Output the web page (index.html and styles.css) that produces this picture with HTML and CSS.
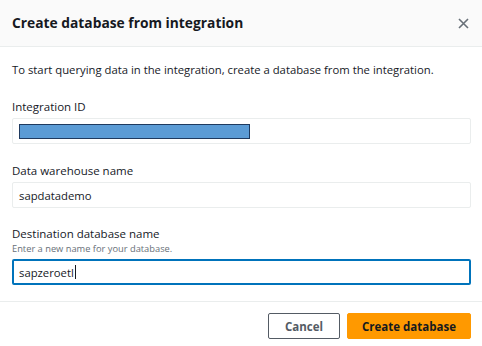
FILE: index.html
```html
<!DOCTYPE html>
<html>
<head>
<meta charset="utf-8">
<link rel="stylesheet" href="styles.css">
</head>
<body>
<div class="modal">
  <div class="header">
    <h2 class="title">Create database from integration</h2>
    <svg class="close" width="11" height="11" viewBox="0 0 11 11"><path d="M1 1 L10 10 M10 1 L1 10" stroke="#687078" stroke-width="1.6" fill="none"/></svg>
  </div>
  <div class="content">
    <p class="desc">To start querying data in the integration, create a database from the integration.</p>
    <div class="field f1">
      <label class="label">Integration ID</label>
      <div class="input"><span class="redact"></span></div>
    </div>
    <div class="field f2">
      <label class="label">Data warehouse name</label>
      <div class="input">sapdatademo</div>
    </div>
    <div class="field f3">
      <label class="label">Destination database name</label>
      <div class="hint">Enter a new name for your database.</div>
      <div class="input focused">sapzeroetl<span class="caret"></span></div>
    </div>
  </div>
  <div class="footer">
    <button class="btn cancel">Cancel</button>
    <button class="btn primary">Create database</button>
  </div>
</div>
</body>
</html>
```
FILE: styles.css
```css
* { box-sizing: border-box; }
body {
  margin: 0;
  background: #ffffff;
  font-family: "Open Sans", "Noto Sans", sans-serif;
  color: #16191f;
}
.modal { width: 482px; height: 346px; display: flex; flex-direction: column; }
.header {
  height: 47px;
  background: #fafafa;
  border-bottom: 1px solid #eaeded;
  display: flex;
  align-items: center;
  justify-content: space-between;
  padding: 0 13px 0 12px;
}
.title {
  margin: 0;
  font-size: 13.8px;
  font-weight: 700;
  line-height: 18px;
  color: #16191f;
}
.close { display: block; margin-top: 1px; }
.content {
  padding: 14px 11px 0 12px;
  display: flex;
  flex-direction: column;
}
.desc {
  margin: 0;
  font-size: 11.3px;
  line-height: 18px;
}
.field { display: flex; flex-direction: column; }
.f1 { margin-top: 19px; }
.f2 { margin-top: 18px; }
.f3 { margin-top: 17px; }
.label {
  font-size: 11.5px;
  line-height: 18px;
  margin-bottom: 2px;
}
.hint {
  font-size: 9.3px;
  line-height: 12px;
  color: #687078;
  margin-top: -2px;
  margin-bottom: 4px;
}
.input {
  height: 26px;
  border: 1px solid #eaeded;
  border-radius: 2px;
  padding: 0 6px;
  font-size: 11.3px;
  display: flex;
  align-items: center;
  color: #16191f;
}
.redact {
  display: block;
  width: 231px;
  height: 15px;
  background: #5b9bd5;
  border: 1px solid #1f3a5f;
}
.focused {
  border: 2px solid #0073bb;
  padding: 0 5px;
}
.caret {
  display: inline-block;
  width: 1px;
  height: 14px;
  background: #16191f;
  margin-left: 1px;
}
.footer {
  margin-top: 16px;
  border-top: 1px solid #eaeded;
  padding: 11px 11px 0 0;
  display: flex;
  justify-content: flex-end;
  gap: 7px;
}
.btn {
  height: 26px;
  font-family: inherit;
  font-size: 11.5px;
  font-weight: 700;
  border-radius: 2px;
  padding: 0;
}
.cancel {
  width: 72px;
  background: #ffffff;
  border: 1px solid #545b64;
  color: #545b64;
}
.primary {
  width: 124px;
  background: #ff9900;
  border: 1px solid #ff9900;
  color: #16191f;
}
```
